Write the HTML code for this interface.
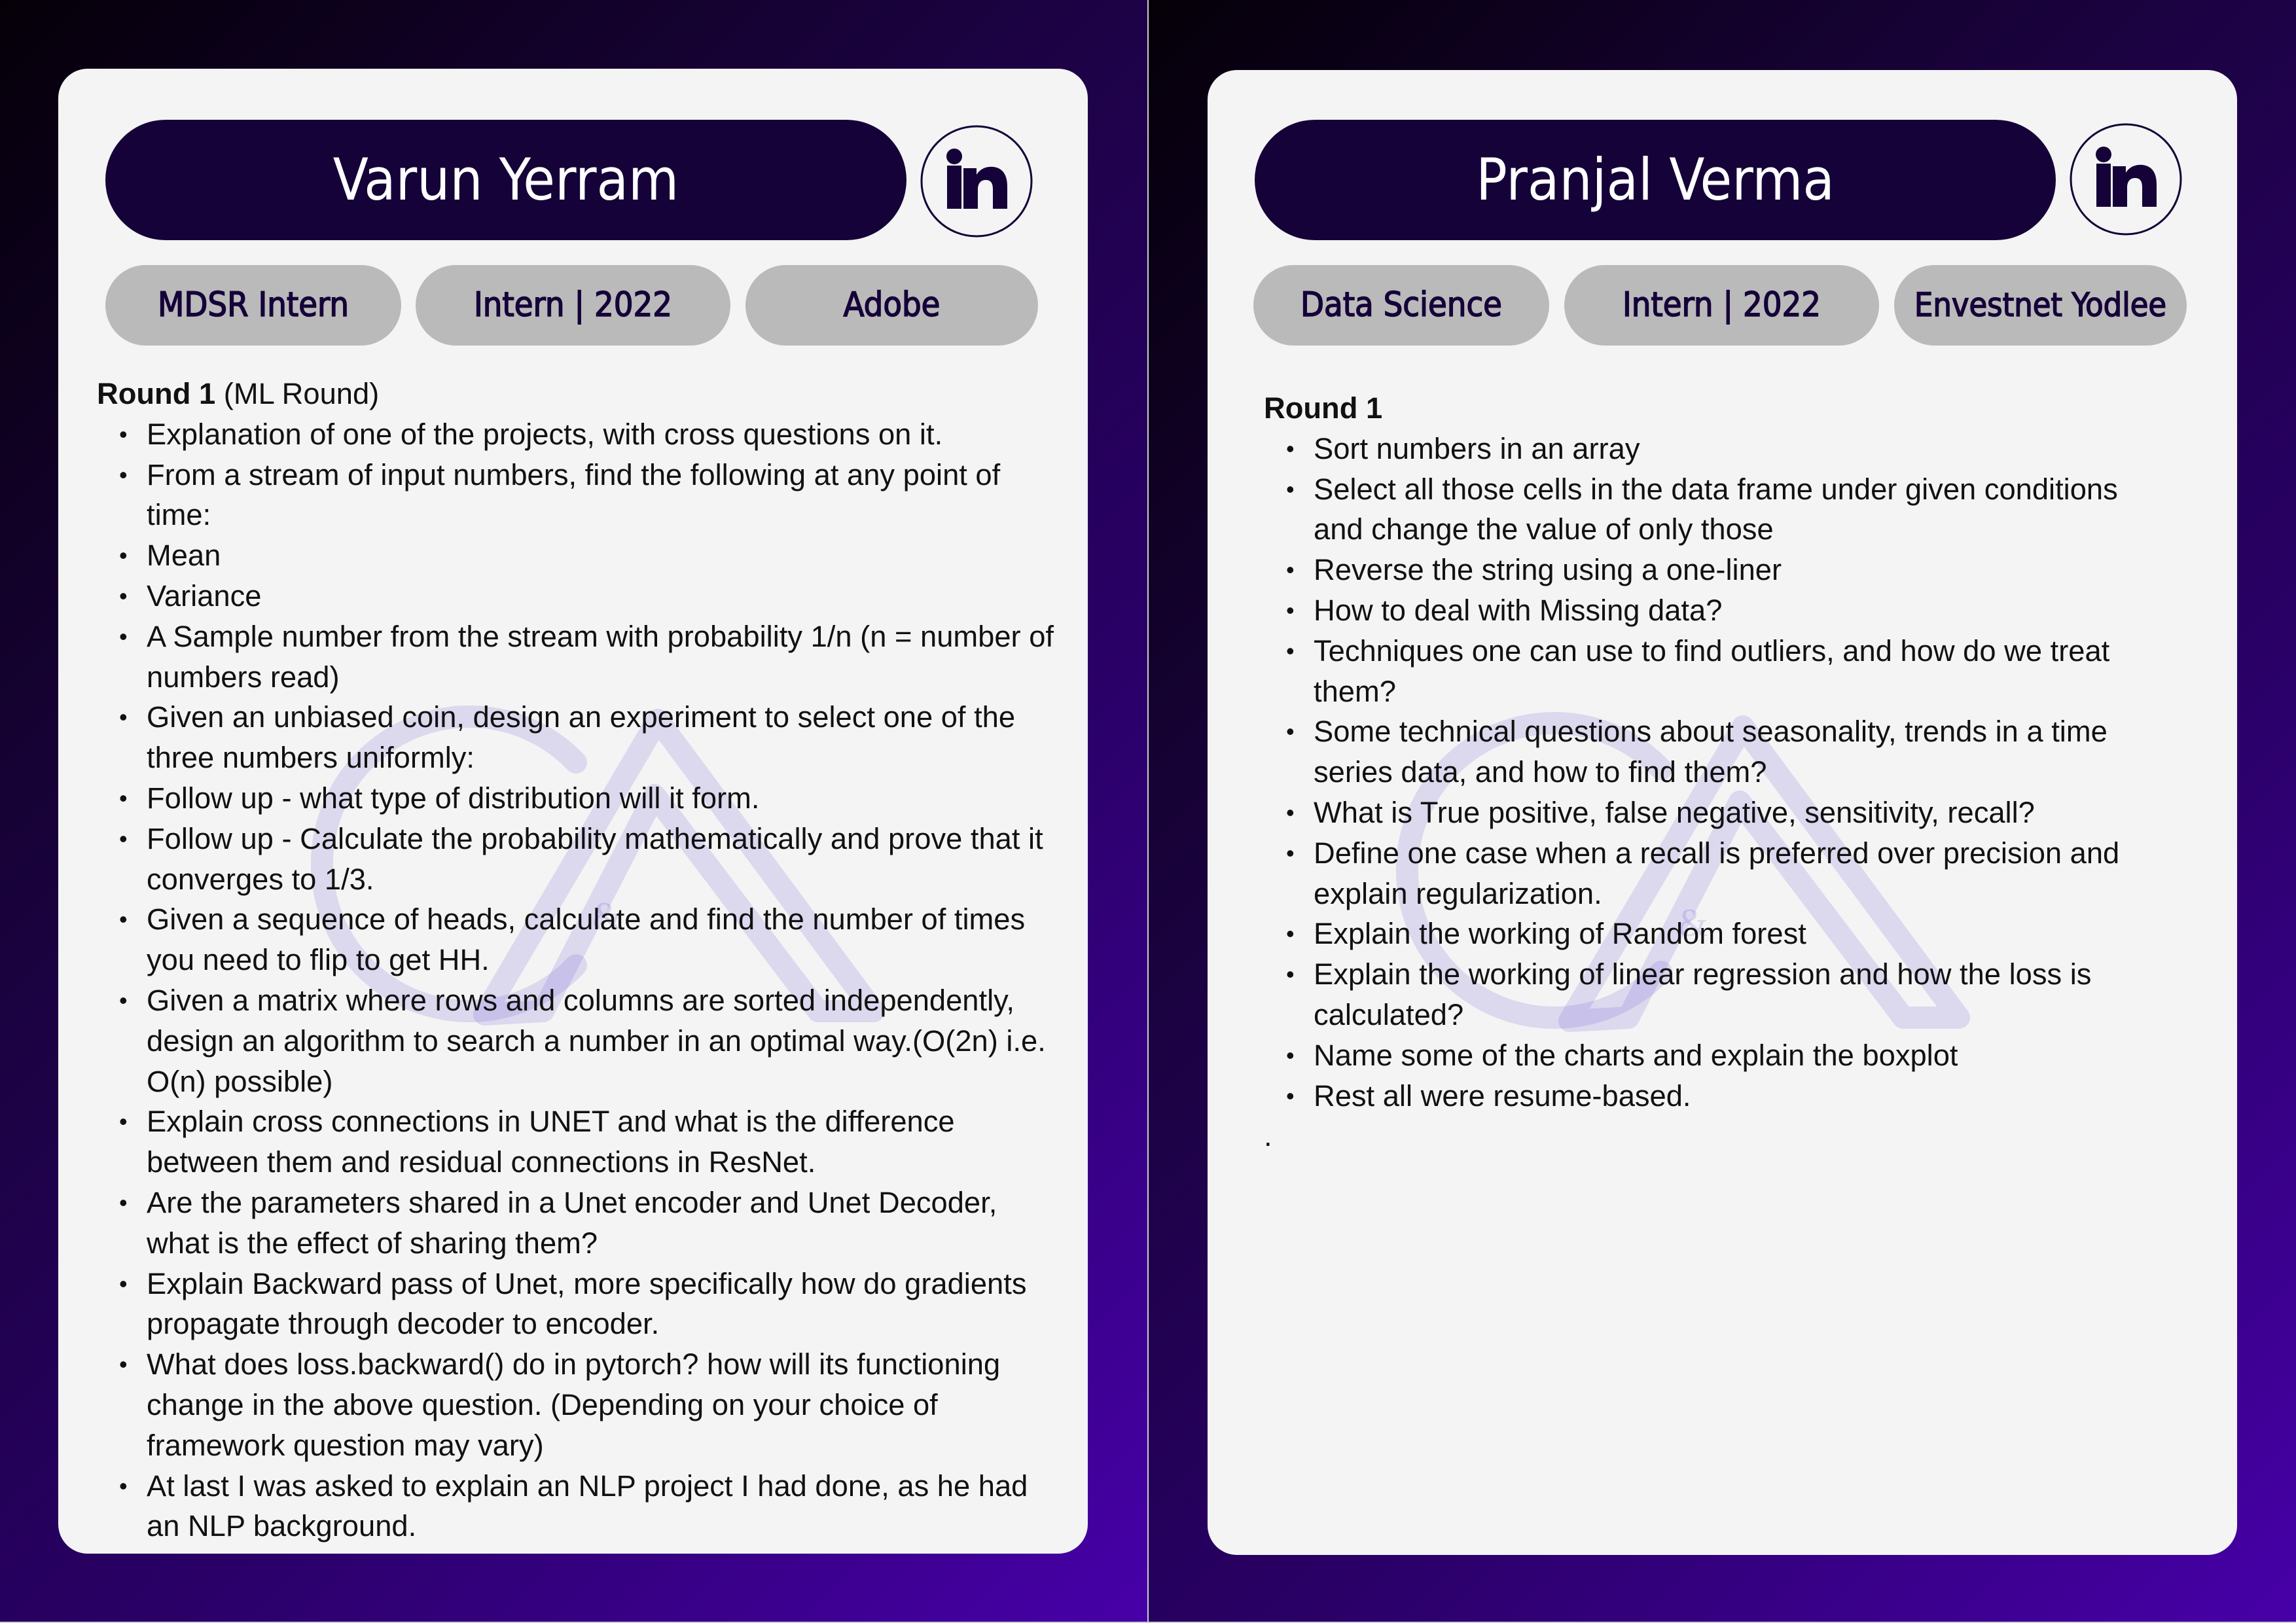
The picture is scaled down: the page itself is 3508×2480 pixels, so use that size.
<!DOCTYPE html>
<html><head><meta charset="utf-8"><style>
*{margin:0;padding:0;box-sizing:border-box}
body{width:3508px;height:2480px;position:relative;overflow:hidden;background:#ccc}
.page{position:absolute;top:0;width:1753px;height:2478px;background:linear-gradient(135deg,#050008 0%,#1a023e 35%,#2a0068 65%,#4700a8 100%)}
.card{position:absolute;width:1573px;height:2269px;background:#f4f4f4;border-radius:45px;overflow:hidden}
.name{position:absolute;left:72px;top:78px;width:1224px;height:184px;background:#150238;border-radius:92px;color:#fff;font-family:"DejaVu Sans Condensed","DejaVu Sans",sans-serif;font-size:88px;text-align:center;line-height:184px}
.li{position:absolute;width:172px;height:172px}
.tag{position:absolute;top:300px;height:123px;background:#bababa;border-radius:62px;color:#150238;font-family:"DejaVu Sans Condensed","DejaVu Sans",sans-serif;font-size:52px;text-align:center;line-height:123px;white-space:nowrap;-webkit-text-stroke:1.5px #150238}
.txt{position:absolute;font-family:"Liberation Sans",sans-serif;font-size:45.3px;line-height:61.8px;color:#111;white-space:nowrap}
.txt ul{list-style:none}
.txt li{position:relative;padding-left:76px}
.txt li:before{content:"•";position:absolute;left:34px;font-size:36px}
.wm{position:absolute;left:0;top:0}
</style></head><body>
<div class="page" style="left:0"></div>
<div class="page" style="left:1755px"></div>

<div class="card" style="left:89px;top:105px">
<svg class="wm" width="1573" height="2269"><g fill="none" stroke="rgba(110,90,210,0.18)" stroke-width="34" stroke-linejoin="round" stroke-linecap="round" transform="translate(-89,-105)">
<path d="M880 1165 A225 225 0 1 0 880 1475"/><path d="M740 1550 L1005 1100 L1335 1545 L1250 1545 L1000 1215 L830 1545 Z"/><text x="905" y="1420" font-size="60" fill="rgba(110,90,210,0.2)" stroke="none" font-family="Liberation Serif">&amp;</text></g></svg>
<div class="name">Varun Yerram</div>
<svg class="li" style="left:1317px;top:86px" viewBox="0 0 172 172"><circle cx="86" cy="86" r="84" fill="none" stroke="#150238" stroke-width="3"/><circle cx="52" cy="48" r="12" fill="#150238"/><rect x="41" y="62" width="22" height="66" fill="#150238"/><path d="M66 66 H86 V76 C92 66 102 63 112 64 C126 66 133 76 133 94 V128 H111 V98 C111 88 107 84 100 84 C92 84 88 90 88 98 V128 H66 Z" fill="#150238"/></svg>
<div class="tag" style="left:72px;width:452px">MDSR Intern</div>
<div class="tag" style="left:546px;width:481px">Intern | 2022</div>
<div class="tag" style="left:1050px;width:447px">Adobe</div>
<div class="txt" style="left:59px;top:466px">
<div><b>Round 1</b> (ML Round)</div>
<ul>
<li>Explanation of one of the projects, with cross questions on it.</li>
<li>From a stream of input numbers, find the following at any point of<br>time:</li>
<li>Mean</li>
<li>Variance</li>
<li>A Sample number from the stream with probability 1/n (n = number of<br>numbers read)</li>
<li>Given an unbiased coin, design an experiment to select one of the<br>three numbers uniformly:</li>
<li>Follow up - what type of distribution will it form.</li>
<li>Follow up - Calculate the probability mathematically and prove that it<br>converges to 1/3.</li>
<li>Given a sequence of heads, calculate and find the number of times<br>you need to flip to get HH.</li>
<li>Given a matrix where rows and columns are sorted independently,<br>design an algorithm to search a number in an optimal way.(O(2n) i.e.<br>O(n) possible)</li>
<li>Explain cross connections in UNET and what is the difference<br>between them and residual connections in ResNet.</li>
<li>Are the parameters shared in a Unet encoder and Unet Decoder,<br>what is the effect of sharing them?</li>
<li>Explain Backward pass of Unet, more specifically how do gradients<br>propagate through decoder to encoder.</li>
<li>What does loss.backward() do in pytorch? how will its functioning<br>change in the above question. (Depending on your choice of<br>framework question may vary)</li>
<li>At last I was asked to explain an NLP project I had done, as he had<br>an NLP background.</li>
</ul></div>
</div>

<div class="card" style="left:1845px;top:107px">
<svg class="wm" width="1573" height="2269"><g fill="none" stroke="rgba(110,90,210,0.18)" stroke-width="34" stroke-linejoin="round" stroke-linecap="round" transform="translate(-187,-97)">
<path d="M880 1165 A225 225 0 1 0 880 1475"/><path d="M740 1550 L1005 1100 L1335 1545 L1250 1545 L1000 1215 L830 1545 Z"/><text x="905" y="1420" font-size="60" fill="rgba(110,90,210,0.2)" stroke="none" font-family="Liberation Serif">&amp;</text></g></svg>
<div class="name" style="top:76px">Pranjal Verma</div>
<svg class="li" style="left:1317px;top:81px" viewBox="0 0 172 172"><circle cx="86" cy="86" r="84" fill="none" stroke="#150238" stroke-width="3"/><circle cx="52" cy="48" r="12" fill="#150238"/><rect x="41" y="62" width="22" height="66" fill="#150238"/><path d="M66 66 H86 V76 C92 66 102 63 112 64 C126 66 133 76 133 94 V128 H111 V98 C111 88 107 84 100 84 C92 84 88 90 88 98 V128 H66 Z" fill="#150238"/></svg>
<div class="tag" style="left:70px;width:452px;top:298px">Data Science</div>
<div class="tag" style="left:545px;width:481px;top:298px">Intern | 2022</div>
<div class="tag" style="left:1049px;width:447px;top:298px;font-size:50px">Envestnet Yodlee</div>
<div class="txt" style="left:86px;top:486px">
<div><b>Round 1</b></div>
<ul>
<li>Sort numbers in an array</li>
<li>Select all those cells in the data frame under given conditions<br>and change the value of only those</li>
<li>Reverse the string using a one-liner</li>
<li>How to deal with Missing data?</li>
<li>Techniques one can use to find outliers, and how do we treat<br>them?</li>
<li>Some technical questions about seasonality, trends in a time<br>series data, and how to find them?</li>
<li>What is True positive, false negative, sensitivity, recall?</li>
<li>Define one case when a recall is preferred over precision and<br>explain regularization.</li>
<li>Explain the working of Random forest</li>
<li>Explain the working of linear regression and how the loss is<br>calculated?</li>
<li>Name some of the charts and explain the boxplot</li>
<li>Rest all were resume-based.</li>
</ul>
<div>.</div></div>
</div>
</body></html>
